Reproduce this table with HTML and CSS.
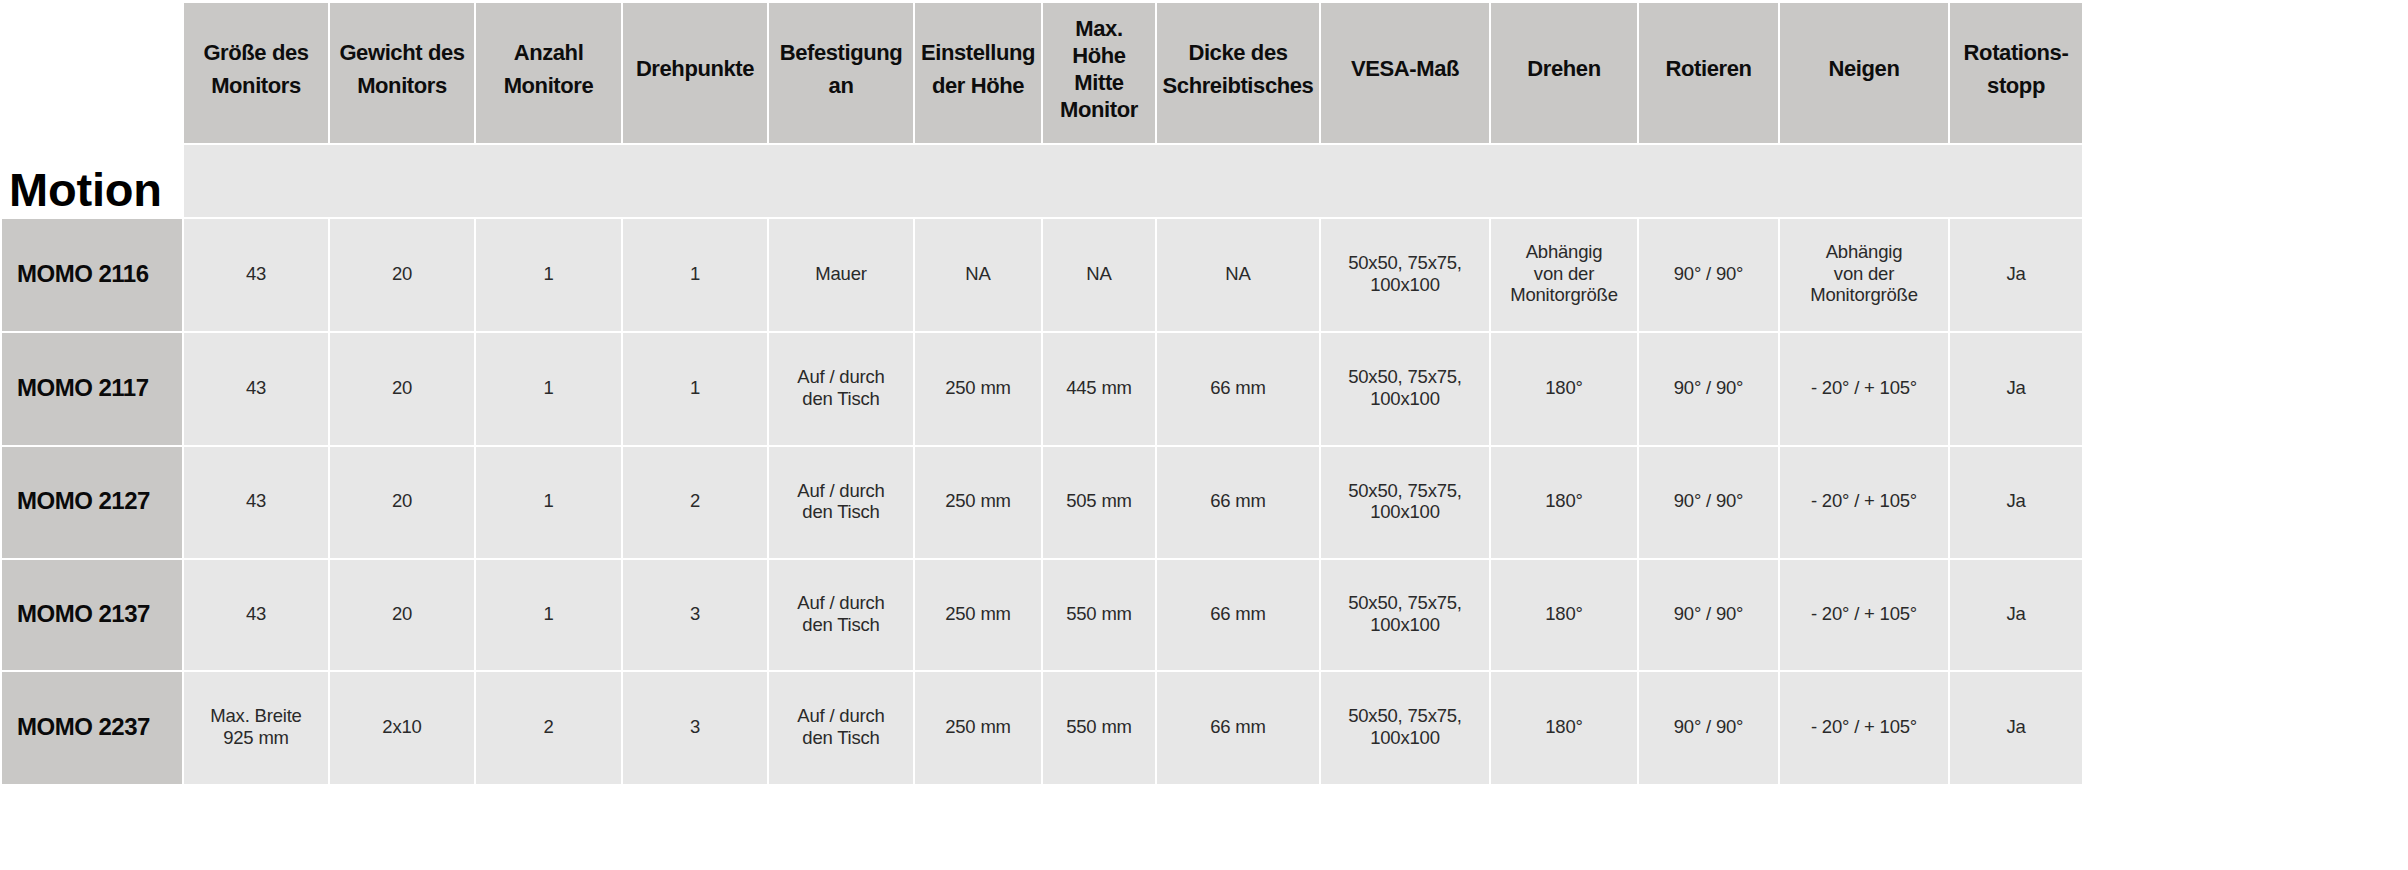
FILE: index.html
```html
<!DOCTYPE html>
<html lang="de">
<head>
<meta charset="utf-8">
<title>Motion – Monitorhalterungen</title>
<link rel="stylesheet" href="styles.css">
</head>
<body>
<div class="spec-table">
  <div class="corner"></div>
  <div class="th">Größe des<br>Monitors</div>
  <div class="th">Gewicht des<br>Monitors</div>
  <div class="th">Anzahl<br>Monitore</div>
  <div class="th">Drehpunkte</div>
  <div class="th">Befestigung<br>an</div>
  <div class="th">Einstellung<br>der Höhe</div>
  <div class="th th-tight">Max.<br>Höhe<br>Mitte<br>Monitor</div>
  <div class="th">Dicke des<br>Schreibtisches</div>
  <div class="th">VESA-Maß</div>
  <div class="th">Drehen</div>
  <div class="th">Rotieren</div>
  <div class="th">Neigen</div>
  <div class="th">Rotations-<br>stopp</div>

  <div class="group-title">Motion</div>
  <div class="group-band"></div>

  <div class="rh">MOMO 2116</div>
  <div class="td">43</div>
  <div class="td">20</div>
  <div class="td">1</div>
  <div class="td">1</div>
  <div class="td">Mauer</div>
  <div class="td">NA</div>
  <div class="td">NA</div>
  <div class="td">NA</div>
  <div class="td">50x50, 75x75,<br>100x100</div>
  <div class="td">Abhängig<br>von der<br>Monitorgröße</div>
  <div class="td">90° / 90°</div>
  <div class="td">Abhängig<br>von der<br>Monitorgröße</div>
  <div class="td">Ja</div>

  <div class="rh">MOMO 2117</div>
  <div class="td">43</div>
  <div class="td">20</div>
  <div class="td">1</div>
  <div class="td">1</div>
  <div class="td">Auf / durch<br>den Tisch</div>
  <div class="td">250 mm</div>
  <div class="td">445 mm</div>
  <div class="td">66 mm</div>
  <div class="td">50x50, 75x75,<br>100x100</div>
  <div class="td">180°</div>
  <div class="td">90° / 90°</div>
  <div class="td">- 20° / + 105°</div>
  <div class="td">Ja</div>

  <div class="rh">MOMO 2127</div>
  <div class="td">43</div>
  <div class="td">20</div>
  <div class="td">1</div>
  <div class="td">2</div>
  <div class="td">Auf / durch<br>den Tisch</div>
  <div class="td">250 mm</div>
  <div class="td">505 mm</div>
  <div class="td">66 mm</div>
  <div class="td">50x50, 75x75,<br>100x100</div>
  <div class="td">180°</div>
  <div class="td">90° / 90°</div>
  <div class="td">- 20° / + 105°</div>
  <div class="td">Ja</div>

  <div class="rh">MOMO 2137</div>
  <div class="td">43</div>
  <div class="td">20</div>
  <div class="td">1</div>
  <div class="td">3</div>
  <div class="td">Auf / durch<br>den Tisch</div>
  <div class="td">250 mm</div>
  <div class="td">550 mm</div>
  <div class="td">66 mm</div>
  <div class="td">50x50, 75x75,<br>100x100</div>
  <div class="td">180°</div>
  <div class="td">90° / 90°</div>
  <div class="td">- 20° / + 105°</div>
  <div class="td">Ja</div>

  <div class="rh">MOMO 2237</div>
  <div class="td">Max. Breite<br>925 mm</div>
  <div class="td">2x10</div>
  <div class="td">2</div>
  <div class="td">3</div>
  <div class="td">Auf / durch<br>den Tisch</div>
  <div class="td">250 mm</div>
  <div class="td">550 mm</div>
  <div class="td">66 mm</div>
  <div class="td">50x50, 75x75,<br>100x100</div>
  <div class="td">180°</div>
  <div class="td">90° / 90°</div>
  <div class="td">- 20° / + 105°</div>
  <div class="td">Ja</div>
</div>
</body>
</html>
```

FILE: styles.css
```css
html, body {
  margin: 0;
  padding: 0;
  background: #ffffff;
}

body {
  font-family: "Liberation Sans", Arial, sans-serif;
  color: #111111;
  padding: 3px 0 0 2px;
}

.spec-table {
  display: grid;
  grid-template-columns: 180px 144px 144px 145px 144px 144px 126px 112px 162px 168px 146px 139px 168px 132px;
  grid-template-rows: 140px 72px 112px 112px 111px 110px 112px;
  gap: 2px;
  width: 2080px;
}

.corner {
  background: #ffffff;
}

.th {
  background: #c9c8c6;
  display: flex;
  align-items: center;
  justify-content: center;
  text-align: center;
  font-weight: 700;
  font-size: 22px;
  line-height: 33px;
  letter-spacing: -0.4px;
  padding: 0 1px 9px;
  color: #0d0d0d;
}

.th-tight {
  line-height: 27px;
  padding-bottom: 8px;
}

.group-title {
  background: #ffffff;
  display: flex;
  align-items: flex-end;
  font-weight: 700;
  font-size: 47px;
  line-height: 47px;
  letter-spacing: -0.2px;
  padding: 0 0 4px 7px;
  color: #000000;
}

.group-band {
  grid-column: 2 / span 13;
  background: #e7e7e7;
}

.rh {
  background: #c9c8c6;
  display: flex;
  align-items: center;
  font-weight: 700;
  font-size: 24px;
  letter-spacing: -0.5px;
  padding: 0 0 3px 15px;
  color: #0a0a0a;
}

.td {
  background: #e7e7e7;
  display: flex;
  align-items: center;
  justify-content: center;
  text-align: center;
  font-size: 18.5px;
  line-height: 21.5px;
  letter-spacing: -0.2px;
  padding: 0 2px 3px;
  color: #2a2a2a;
}
```
